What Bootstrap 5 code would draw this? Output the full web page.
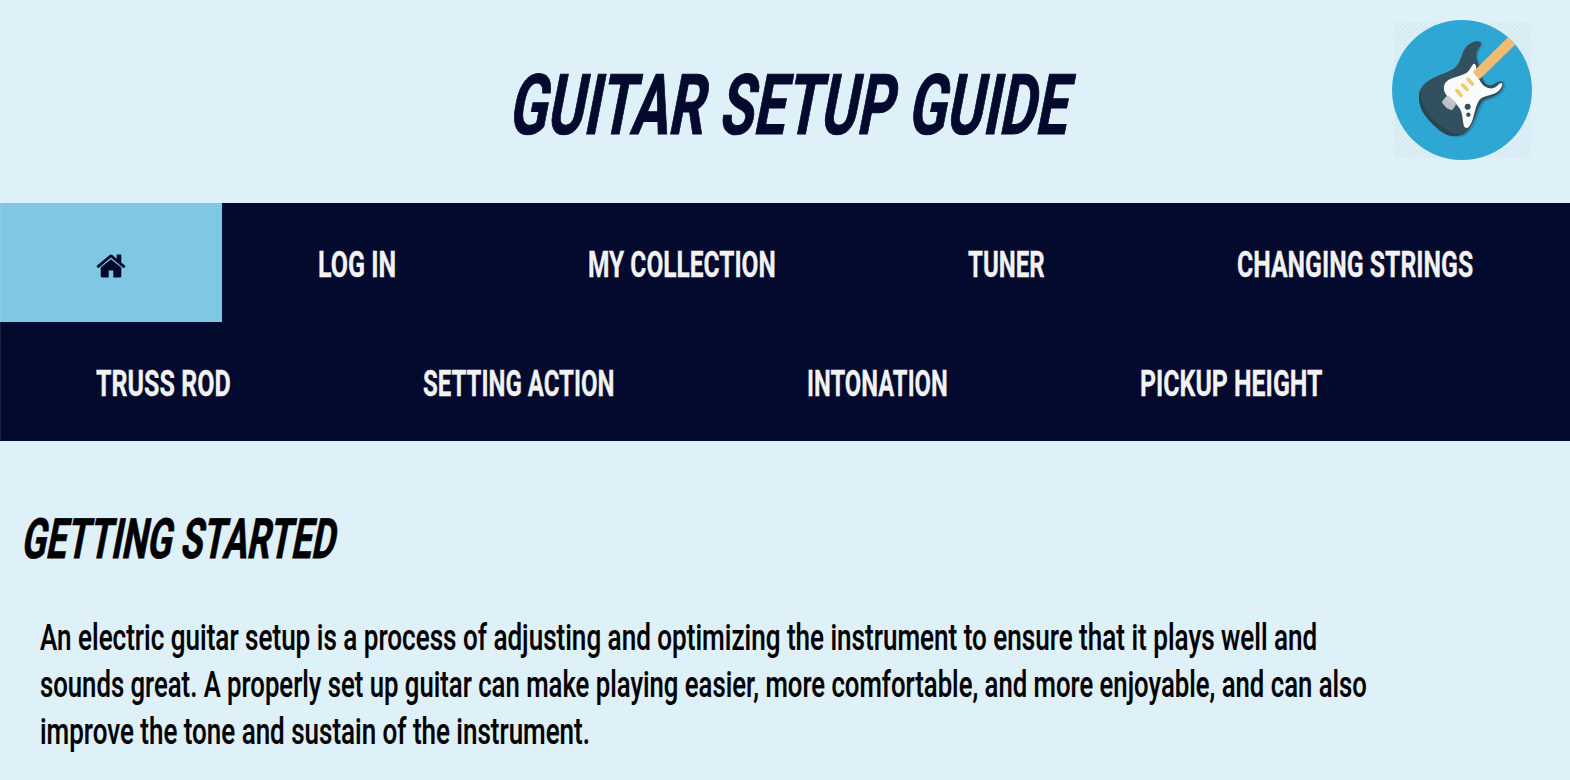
<!DOCTYPE html>
<html lang="en">
<head>
<meta charset="utf-8">
<meta name="viewport" content="width=device-width, initial-scale=1">
<title>Guitar Setup Guide</title>
<link rel="stylesheet" href="https://cdn.jsdelivr.net/npm/bootstrap@5.3.0/dist/css/bootstrap.min.css">
<style>
  body { background: #def0f8; color: #000; font-family: "Roboto", "Liberation Sans", sans-serif; overflow: hidden; }
  .site-head { height: 203px; }
  .site-title { font-size: 84px; line-height: 100px; font-weight: 700; color: #040a2e; width: 558px; margin: 56px 0 0 13px; word-spacing: 2px; -webkit-text-stroke: 1px; }
  .site-logo { top: 10px; right: 30px; width: 160px; height: 160px; }
  .site-nav { background: #040a2e; box-shadow: inset 1px 0 #1c2242; }
  .site-nav .nav-link { height: 119px; padding: 39px 96px 0; color: #f2f2f2; font-size: 37.5px; line-height: 44px; font-weight: 700; -webkit-text-stroke: .3px; }
  .site-nav .nav-link.active { background: #7ec8e3; color: #040a2e; padding-top: 46.5px; box-shadow: inset 1px 0 #89cde6; }
  .home-icon { width: 32px; height: 32px; margin: 0 -1px; }
  .section-title { font-size: 55.5px; line-height: 64px; font-weight: 700; width: 313px; margin: 67px 0 0 24px; -webkit-text-stroke: .8px; }
  .intro { font-size: 36.5px; line-height: 47px; font-weight: 500; margin: 42px 0 0 40px; -webkit-text-stroke: .2px; }
  .fit { display: block; white-space: nowrap; }
  .fit > span { display: inline-block; transform-origin: 0 50%; }
</style>
</head>
<body>
<header class="site-head position-relative d-flex justify-content-center">
  <h1 class="site-title fit slant" data-w="558"><span>GUITAR SETUP GUIDE</span></h1>
  <svg class="site-logo position-absolute" viewBox="0 0 480 480" role="img" aria-label="Electric guitar">
    <defs>
      <pattern id="hatch" width="14" height="14" patternUnits="userSpaceOnUse"><path d="M-3 3L3-3M0 14L14 0M11 17L17 11" stroke="#20404c" stroke-width="4" opacity=".05"/></pattern>
      <clipPath id="disc"><circle cx="246" cy="240" r="210"/></clipPath>
    </defs>
    <circle cx="246" cy="240" r="210" fill="#2ea9d6"/>
    <g clip-path="url(#disc)">
      <path transform="translate(6 4)" fill="#2791b9" d="M302 96C306 101 303 106 296 113C288 124 286 140 294 158L304 197C308 207 310 221 326 225C341 229 347 215 361 214C371 213 375 222 365 239C349 266 316 260 304 279C286 307 283 350 255 370C239 380 216 381 198 373L230 172Z"/>
      <path fill="#33505f" d="M302 96C292 90 272 95 258 111C245 128 244 151 230 168C210 192 158 192 126 230C112 252 115 284 130 309C147 335 176 362 198 373C216 381 239 380 255 370C283 350 286 307 304 279C316 260 349 266 365 239C375 222 371 213 361 214C347 215 341 229 326 225C310 221 308 207 304 197L294 158C286 140 288 124 299 111Q306 101 302 96Z"/>
      <path fill="#294552" d="M123 235C112 258 117 288 133 312C151 338 176 362 198 373C216 381 239 380 255 370C246 373 226 374 210 365C175 347 143 315 129 282C122 264 121 249 123 235Z"/>
      <path fill="#fff" d="M283 161C275 162 272 180 260 188C238 201 205 202 195 220C187 236 194 254 207 263C222 271 232 285 240 297C249 311 247 334 252 348C255 356 264 355 269 348C283 328 283 292 298 270C309 256 335 258 352 246C362 238 371 223 366 219C356 216 352 237 329 235C309 232 303 218 294 202C288 190 291 162 283 161Z"/>
      <path fill="#f5be76" d="M281 184L388 78L410 100L302 205Q298 208 294 204L282 191Q279 187 281 184Z"/>
      <g stroke="#f4cc73" stroke-width="11" stroke-linecap="round"><path d="M264 208L277 222M248 225L261 238M231 242L243 256"/></g>
      <path fill="#c5cbd0" d="M198 260Q202 256 207 259L228 277Q231 280 228 283L220 296Q216 301 211 299L200 294L187 279Q185 276 188 272Z"/>
      <path fill="#aeb5bb" d="M188 274L203 270L211 280L228 280L219 297Q215 301 211 299L200 294L187 280Z" opacity=".4"/>
      <circle cx="263" cy="290" r="9" fill="#33505f"/><circle cx="265" cy="314" r="6.5" fill="#33505f"/>
    </g>
    <rect x="42" y="36" width="411" height="408" fill="url(#hatch)"/>
  </svg>
</header>
<nav class="site-nav">
  <ul class="nav">
    <li class="nav-item"><a class="nav-link active" href="#" aria-label="Home"><svg class="home-icon d-block" viewBox="0 0 1792 1792" fill="currentColor"><path d="M1472 992v480q0 26-19 45t-45 19h-384v-384h-256v384h-384q-26 0-45-19t-19-45v-480q0-1 .5-3t.5-3l575-474 575 474q1 2 1 6zm223-69l-62 74q-8 9-21 11h-3q-13 0-21-7l-692-577-692 577q-12 8-24 7-13-2-21-11l-62-74q-8-10-7-23.5t11-21.5l719-599q32-26 76-26t76 26l244 204v-195q0-14 9-23t23-9h192q14 0 23 9t9 23v408l219 182q10 8 11 21.5t-7 23.5z"/></svg></a></li>
    <li class="nav-item"><a class="nav-link" href="#"><span class="fit" data-w="78"><span>LOG IN</span></span></a></li>
    <li class="nav-item"><a class="nav-link" href="#"><span class="fit" data-w="187.5"><span>MY COLLECTION</span></span></a></li>
    <li class="nav-item"><a class="nav-link" href="#"><span class="fit" data-w="77"><span>TUNER</span></span></a></li>
    <li class="nav-item"><a class="nav-link" href="#"><span class="fit" data-w="236"><span>CHANGING STRINGS</span></span></a></li>
    <li class="nav-item"><a class="nav-link" href="#"><span class="fit" data-w="135"><span>TRUSS ROD</span></span></a></li>
    <li class="nav-item"><a class="nav-link" href="#"><span class="fit" data-w="191.5"><span>SETTING ACTION</span></span></a></li>
    <li class="nav-item"><a class="nav-link" href="#"><span class="fit" data-w="141"><span>INTONATION</span></span></a></li>
    <li class="nav-item"><a class="nav-link" href="#"><span class="fit" data-w="182.5"><span>PICKUP HEIGHT</span></span></a></li>
  </ul>
</nav>
<main>
  <h2 class="section-title fit slant" data-w="313"><span>GETTING STARTED</span></h2>
  <p class="intro">
    <span class="fit" data-w="1277"><span>An electric guitar setup is a process of adjusting and optimizing the instrument to ensure that it plays well and</span></span>
    <span class="fit" data-w="1327"><span>sounds great. A properly set up guitar can make playing easier, more comfortable, and more enjoyable, and can also</span></span>
    <span class="fit" data-w="550"><span>improve the tone and sustain of the instrument.</span></span>
  </p>
</main>
<script src="https://cdn.jsdelivr.net/npm/bootstrap@5.3.0/dist/js/bootstrap.bundle.min.js"></script>
<script>
  // Condense each line of lettering to its set width.
  document.querySelectorAll('.fit').forEach(function (el) {
    var text = el.firstElementChild, w = parseFloat(el.dataset.w), natural = text.offsetWidth;
    el.style.width = w + 'px';
    text.style.marginRight = (w - natural) + 'px';
    text.style.transform = (el.classList.contains('slant') ? 'skewX(-11deg) ' : '') + 'scaleX(' + w / natural + ')';
  });
</script>
</body>
</html>
